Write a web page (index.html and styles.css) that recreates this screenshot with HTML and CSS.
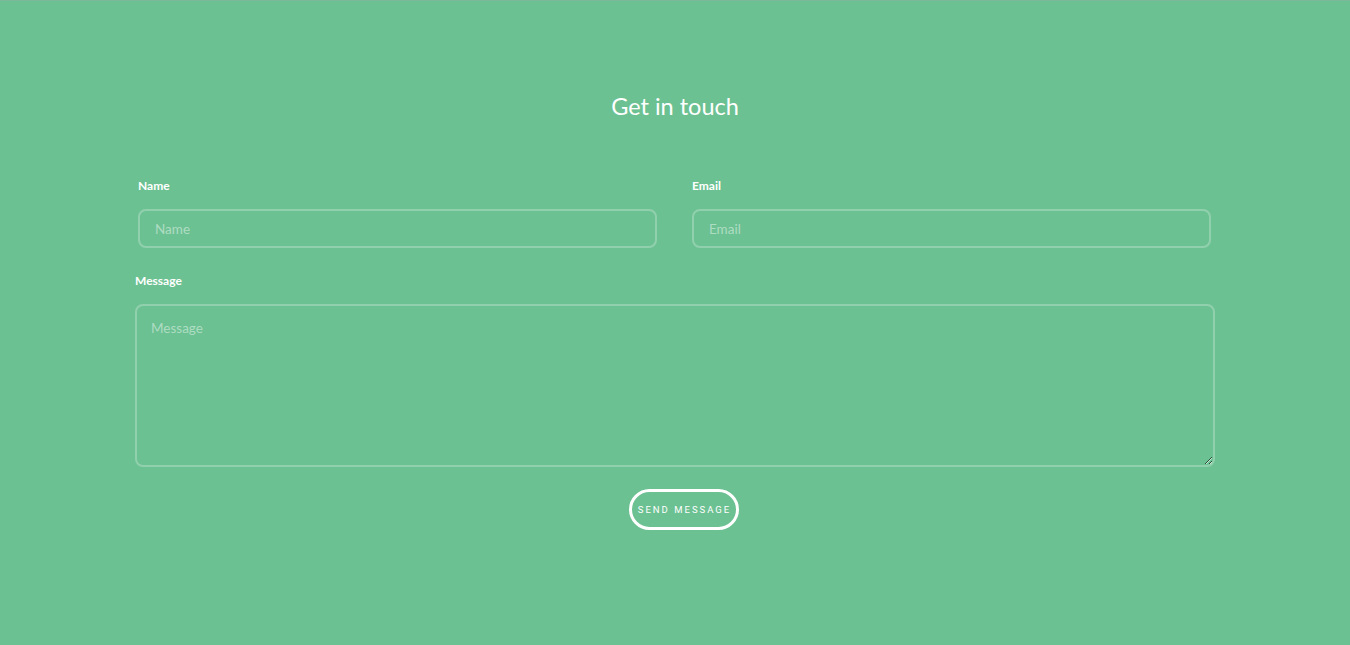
FILE: index.html
```html
<!DOCTYPE html>
<html>
<head>
<meta charset="utf-8">
<link rel="stylesheet" href="styles.css">
</head>
<body>
<section class="contact">
  <h2 class="title">Get in touch</h2>
  <form class="form">
    <div class="row">
      <div class="field half left">
        <label class="label">Name</label>
        <input class="input" type="text" placeholder="Name">
      </div>
      <div class="field half right">
        <label class="label">Email</label>
        <input class="input" type="text" placeholder="Email">
      </div>
    </div>
    <div class="field full">
      <label class="label">Message</label>
      <textarea class="textarea" placeholder="Message"></textarea>
    </div>
    <div class="actions">
      <button class="btn" type="button">SEND MESSAGE</button>
    </div>
  </form>
</section>
</body>
</html>
```
FILE: styles.css
```css
html, body {
  margin: 0;
  padding: 0;
  height: 100%;
}
body {
  background: #6cc192;
  font-family: Lato, "Liberation Sans", sans-serif;
  color: #fff;
  border-top: 1px solid #7bb99a;
  box-sizing: border-box;
}
.contact {
  width: 1080px;
  margin: 0 auto;
  padding-top: 91px;
}
.title {
  margin: 0;
  text-align: center;
  font-weight: 400;
  font-size: 23.5px;
  line-height: 28px;
}
.form {
  margin-top: 59px;
}
.row {
  display: flex;
  justify-content: space-between;
}
.field {
  display: flex;
  flex-direction: column;
}
.half {
  width: 519px;
}
.left { margin-left: 3px; }
.right { margin-right: 4px; }
.label {
  font-size: 12px;
  font-weight: 700;
  line-height: 14px;
  margin-bottom: 16px;
}
.input, .textarea {
  box-sizing: border-box;
  background: transparent;
  border: 2px solid rgba(255, 255, 255, 0.25);
  border-radius: 8px;
  font-family: Lato, "Liberation Sans", sans-serif;
  font-size: 13.5px;
  color: #fff;
  outline: none;
  margin: 0;
}
.input {
  height: 39px;
  padding: 0 15px;
}
.full {
  margin-top: 26px;
}
.textarea {
  height: 163px;
  padding: 14px 14px;
  resize: vertical;
  width: 100%;
}
.input::placeholder, .textarea::placeholder {
  color: rgba(255, 255, 255, 0.46);
}
.actions {
  display: flex;
  justify-content: center;
  margin-top: 22px;
}
.btn {
  box-sizing: border-box;
  width: 110px;
  height: 41px;
  border: 3px solid #fff;
  border-radius: 21px;
  background: transparent;
  color: #fff;
  font-family: Roboto, "Liberation Sans", sans-serif;
  font-size: 9.5px;
  font-weight: 400;
  letter-spacing: 2px;
  padding: 0 0 0 2px;
  margin-left: 17px;
  cursor: pointer;
}
```
